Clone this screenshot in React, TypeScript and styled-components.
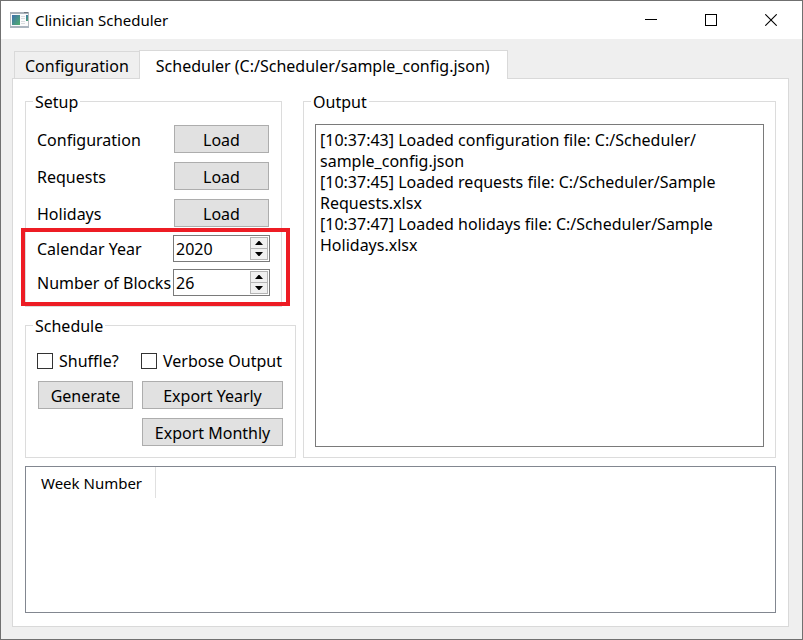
import React, { useState } from "react";
import styled, { createGlobalStyle } from "styled-components";

const GlobalStyle = createGlobalStyle`
  *, *::before, *::after { box-sizing: border-box; }
  body { margin: 0; }
  body, button, input, textarea {
    font-family: "Noto Sans", "Open Sans", sans-serif;
    font-size: 16px;
    line-height: 20px;
    color: #000;
  }
`;

const Window = styled.main`
  display: flex;
  flex-direction: column;
  min-height: 100vh;
  border: 1px solid #707070;
  background: #efefef;
`;

const TitleBar = styled.header`
  display: flex;
  align-items: center;
  height: 38px;
  padding: 0 1px 0 9px;
  background: #fff;
`;

const Title = styled.h1`
  flex: 1;
  margin: 0 0 0 5px;
  font-size: 15px;
  font-weight: 400;
`;

const CaptionButton = styled.button`
  display: grid;
  place-items: center;
  width: 60px;
  height: 38px;
  padding: 0;
  border: 0;
  background: transparent;
`;

const Tabs = styled.nav`
  display: flex;
  align-items: flex-end;
  margin: 11px 13px 0;
`;

const Tab = styled.button<{ $active?: boolean }>`
  position: relative;
  height: ${(p) => (p.$active ? 29 : 27)}px;
  margin-bottom: ${(p) => (p.$active ? -1 : 0)}px;
  padding: ${(p) => (p.$active ? "1px 17px 0 16px" : "2px 10px 0")};
  border: 1px solid #d9d9d9;
  border-width: ${(p) => (p.$active ? "1px 1px 0" : "1px 0 0 1px")};
  background: ${(p) => (p.$active ? "#fff" : "#efefef")};
  white-space: nowrap;
`;

const Pane = styled.section`
  display: flex;
  flex: 1;
  flex-direction: column;
  gap: 8px;
  margin: 0 13px 12px 11px;
  padding: 13px 12px;
  border: 1px solid #d9d9d9;
  background: #fff;
`;

const Columns = styled.div`
  display: flex;
  gap: 7px;
`;

const SideColumn = styled.div`
  display: flex;
  flex: none;
  flex-direction: column;
  align-items: flex-start;
  gap: 9px;
`;

const Group = styled.fieldset`
  min-width: 0;
  margin: 0;
  padding: 15px 11px 10px;
  border: 1px solid #dcdcdc;
`;

const OutputGroup = styled(Group)`
  display: flex;
  flex: 1;
  padding-top: 14px;
`;

const GroupTitle = styled.legend`
  height: 18px;
  margin-left: -4px;
  padding: 0 2px;
`;

const SetupRows = styled.div<{ $gap: number }>`
  display: grid;
  grid-template-columns: 136px 97px;
  align-items: center;
  row-gap: ${(p) => p.$gap}px;
`;

const HighlightedRows = styled(SetupRows)`
  position: relative;
  margin-top: 8px;

  &::after {
    content: "";
    position: absolute;
    inset: -7px -20px -10px -16px;
    border: 4px solid #ed1c24;
    pointer-events: none;
  }
`;

const FieldLabel = styled.label`
  padding-top: 1px;
  white-space: nowrap;
`;

const PushButton = styled.button`
  height: 28px;
  margin: 0 1px;
  padding: 2px 0 0;
  border: 1px solid #adadad;
  background: #e1e1e1;
  white-space: nowrap;
`;

const SpinBox = styled.div`
  display: flex;
  height: 27px;
  padding: 1px;
  border: 1px solid #7a7a7a;
  background: #fff;
`;

const SpinInput = styled.input`
  flex: 1;
  width: 0;
  padding: 0 0 0 1px;
  border: 0;
  outline: 0;
  background: transparent;
  appearance: textfield;

  &::-webkit-inner-spin-button { appearance: none; }
`;

const Steppers = styled.div`
  display: grid;
  grid-template-rows: 12px 11px;
  width: 18px;
`;

const Stepper = styled.button`
  display: grid;
  place-items: center;
  padding: 0;
  border: 1px solid #b4b4b4;
  background: #f0f0f0;

  & + & { border-top: 0; }
`;

const ActionGrid = styled.div`
  display: grid;
  grid-template-columns: 97px 143px;
  gap: 9px 7px;
  padding-bottom: 1px;
`;

const CheckLabel = styled.label`
  display: flex;
  align-items: center;
  gap: 6px;
  height: 23px;
  white-space: nowrap;
`;

const CheckInput = styled.input`
  flex: none;
  width: 16px;
  height: 16px;
  margin: 0;
  border: 1px solid #333;
  background: #fff;
  appearance: none;

  &:checked { box-shadow: inset 0 0 0 3px #fff; background: #333; }
`;

const SecondColumnButton = styled(PushButton)`
  grid-column: 2;
`;

const Log = styled.textarea`
  flex: 1;
  min-width: 0;
  padding: 5px 4px;
  border: 1px solid #7a7a7a;
  outline: 0;
  background: #fff;
  line-height: 21px;
  resize: none;
`;

const TableFrame = styled.div`
  flex: 1;
  border: 1px solid #828790;
`;

const WeekTable = styled.table`
  border-collapse: collapse;
`;

const HeaderCell = styled.th`
  height: 31px;
  padding: 0 13px 0 15px;
  border-right: 1px solid #e0e0e0;
  font-size: 15px;
  font-weight: 400;
`;

const AppIcon = () => (
  <svg width="20" height="16" viewBox="0 0 20 16" aria-hidden="true">
    <defs>
      <linearGradient id="screen" x1="0" y1="0" x2="1" y2="1">
        <stop offset="0" stopColor="#3f6fae" />
        <stop offset="1" stopColor="#4fb06c" />
      </linearGradient>
    </defs>
    <rect x="0.5" y="0.5" width="18" height="14" fill="#fbfbfc" stroke="#b4bac0" />
    <rect x="0" y="0" width="19" height="2" fill="#a9b1b9" />
    <rect x="14" y="0" width="4" height="1" fill="#6f7780" />
    <rect x="0" y="14" width="19" height="2" fill="#aab4be" />
    <rect x="2" y="3" width="8" height="10" fill="url(#screen)" />
    <path d="M11 4.5H15M11 6.5H15M11 9.5H15M11 11.5H15" stroke="#d9dcdf" />
    <rect x="16" y="3" width="2" height="6" fill="url(#screen)" />
  </svg>
);

const Arrow = ({ down }: { down?: boolean }) => (
  <svg width="8" height="4" viewBox="0 0 8 4" aria-hidden="true">
    <path d={down ? "M0 0H8L4.5 4H3.5Z" : "M0 4H8L4.5 0H3.5Z"} />
  </svg>
);

function NumberField({ id, label, initial }: { id: string; label: string; initial: number }) {
  const [value, setValue] = useState(initial);
  return (
    <>
      <FieldLabel htmlFor={id}>{label}</FieldLabel>
      <SpinBox>
        <SpinInput id={id} type="number" value={value} onChange={(e) => setValue(Number(e.target.value))} />
        <Steppers>
          <Stepper type="button" aria-label={`Increase ${label}`} onClick={() => setValue(value + 1)}>
            <Arrow />
          </Stepper>
          <Stepper type="button" aria-label={`Decrease ${label}`} onClick={() => setValue(value - 1)}>
            <Arrow down />
          </Stepper>
        </Steppers>
      </SpinBox>
    </>
  );
}

const sources = ["Configuration", "Requests", "Holidays"];

// The zero-width space lets a long path wrap after its folder.
const logText = [
  "[10:37:43] Loaded configuration file: C:/Scheduler/\u200Bsample_config.json",
  "[10:37:45] Loaded requests file: C:/Scheduler/Sample Requests.xlsx",
  "[10:37:47] Loaded holidays file: C:/Scheduler/Sample Holidays.xlsx",
].join("\n");

export default function App() {
  return (
    <>
      <GlobalStyle />
      <Window>
        <TitleBar>
          <AppIcon />
          <Title>Clinician Scheduler</Title>
          <CaptionButton aria-label="Minimize">
            <svg width="12" height="12" shapeRendering="crispEdges">
              <path d="M0 5.5H12" stroke="#000" />
            </svg>
          </CaptionButton>
          <CaptionButton aria-label="Maximize">
            <svg width="12" height="12">
              <rect x="0.5" y="0.5" width="11" height="11" fill="none" stroke="#000" />
            </svg>
          </CaptionButton>
          <CaptionButton aria-label="Close">
            <svg width="12" height="12">
              <path d="M0.3 0.3L11.7 11.7M11.7 0.3L0.3 11.7" stroke="#000" strokeWidth="1.1" />
            </svg>
          </CaptionButton>
        </TitleBar>
        <Tabs>
          <Tab>Configuration</Tab>
          <Tab $active>Scheduler (C:/Scheduler/sample_config.json)</Tab>
        </Tabs>
        <Pane>
          <Columns>
            <SideColumn>
              <Group>
                <GroupTitle>Setup</GroupTitle>
                <SetupRows $gap={9}>
                  {sources.map((name) => (
                    <React.Fragment key={name}>
                      <FieldLabel htmlFor={`load-${name}`}>{name}</FieldLabel>
                      <PushButton id={`load-${name}`}>Load</PushButton>
                    </React.Fragment>
                  ))}
                </SetupRows>
                <HighlightedRows $gap={7}>
                  <NumberField id="year" label="Calendar Year" initial={2020} />
                  <NumberField id="blocks" label="Number of Blocks" initial={26} />
                </HighlightedRows>
              </Group>
              <Group>
                <GroupTitle>Schedule</GroupTitle>
                <ActionGrid>
                  <CheckLabel>
                    <CheckInput type="checkbox" />
                    Shuffle?
                  </CheckLabel>
                  <CheckLabel>
                    <CheckInput type="checkbox" />
                    Verbose Output
                  </CheckLabel>
                  <PushButton>Generate</PushButton>
                  <PushButton>Export Yearly</PushButton>
                  <SecondColumnButton>Export Monthly</SecondColumnButton>
                </ActionGrid>
              </Group>
            </SideColumn>
            <OutputGroup>
              <GroupTitle>Output</GroupTitle>
              <Log readOnly aria-label="Output" value={logText} />
            </OutputGroup>
          </Columns>
          <TableFrame>
            <WeekTable>
              <thead>
                <tr>
                  <HeaderCell scope="col">Week Number</HeaderCell>
                </tr>
              </thead>
            </WeekTable>
          </TableFrame>
        </Pane>
      </Window>
    </>
  );
}
